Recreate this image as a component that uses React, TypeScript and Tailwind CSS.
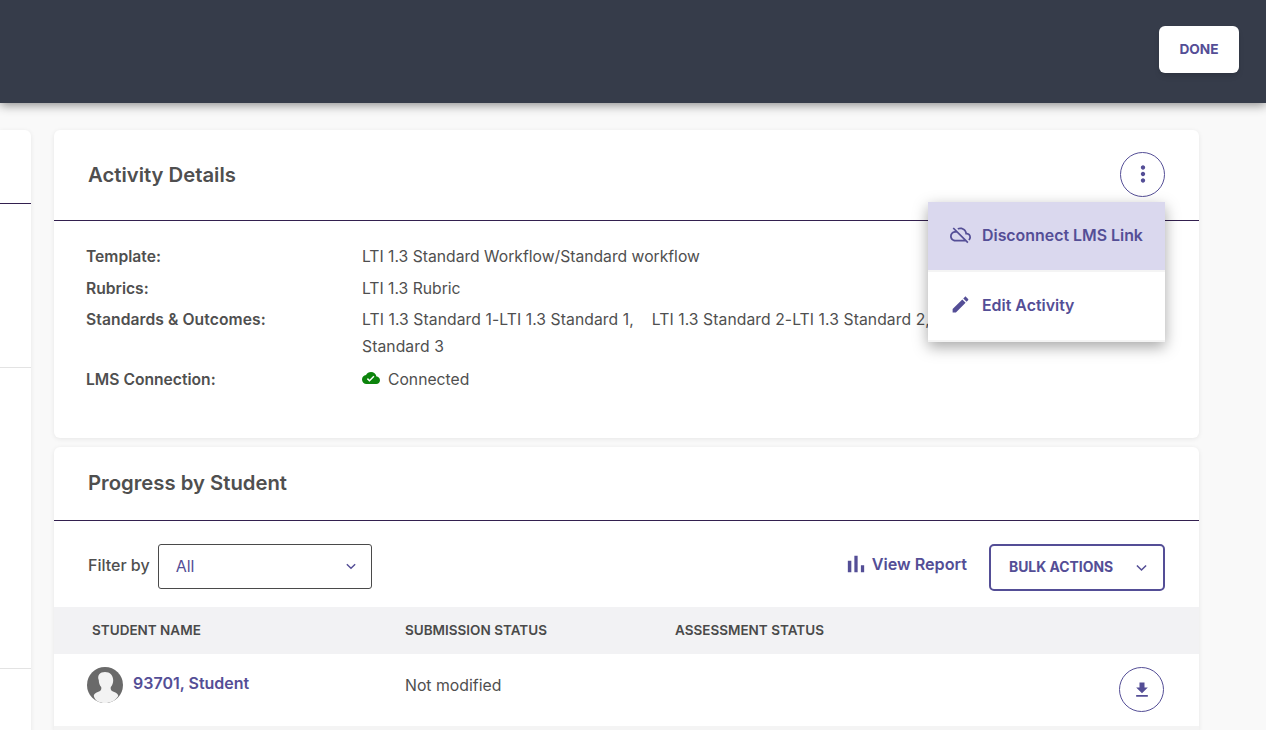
import React from 'react';

const PURPLE = 'text-[#544e96]';

function Icon({ d, className }: { d: string; className?: string }) {
  return (
    <svg viewBox="0 0 24 24" fill="currentColor" className={className}>
      <path d={d} />
    </svg>
  );
}

const icons = {
  more: 'M12 8c1.1 0 2-.9 2-2s-.9-2-2-2-2 .9-2 2 .9 2 2 2zm0 2c-1.1 0-2 .9-2 2s.9 2 2 2 2-.9 2-2-.9-2-2-2zm0 6c-1.1 0-2 .9-2 2s.9 2 2 2 2-.9 2-2-.9-2-2-2z',
  edit: 'M3 17.25V21h3.75L17.81 9.94l-3.75-3.75L3 17.25zM20.71 7.04c.39-.39.39-1.02 0-1.41l-2.34-2.34c-.39-.39-1.02-.39-1.41 0l-1.83 1.83 3.75 3.75 1.83-1.83z',
  chart: 'M5 9.2h3V19H5zM10.6 5h2.8v14h-2.8zm5.6 8H19v6h-2.8z',
  cloudDone:
    'M19.35 10.04C18.67 6.59 15.64 4 12 4 9.11 4 6.6 5.64 5.35 8.04 2.34 8.36 0 10.91 0 14c0 3.31 2.69 6 6 6h13c2.76 0 5-2.24 5-5 0-2.64-2.05-4.78-4.65-4.96zM10 17l-3.5-3.5 1.41-1.41L10 14.17l5.18-5.18 1.41 1.41L10 17z',
  download: 'M19 9h-4V3H9v6H5l7 7 7-7zM5 18v2h14v-2H5z',
  cloudOff:
    'M24 15c0-2.64-2.05-4.78-4.65-4.96C18.67 6.59 15.64 4 12 4c-1.33 0-2.57.36-3.65.97l1.49 1.49C10.51 6.17 11.23 6 12 6c3.04 0 5.5 2.46 5.5 5.5v.5H19c1.66 0 3 1.34 3 3 0 .99-.48 1.85-1.21 2.4l1.41 1.41c1.09-.92 1.8-2.27 1.8-3.81zM4.41 3.86L3 5.27l2.77 2.77h-.42C2.34 8.36 0 10.91 0 14c0 3.31 2.69 6 6 6h11.73l2 2 1.41-1.41L4.41 3.86zM6 18c-2.21 0-4-1.79-4-4s1.79-4 4-4h1.73l8 8H6z',
};

function Chevron({ className }: { className?: string }) {
  return (
    <svg viewBox="0 0 12 8" fill="none" stroke="currentColor" strokeWidth="1.7" className={className}>
      <path d="M1 1.200 6 6.200l5-5" />
    </svg>
  );
}

function Avatar() {
  return (
    <svg viewBox="0 0 36 36" className="w-9 h-9 shrink-0">
      <circle cx="18" cy="18" r="18" fill="#6a6a6a" />
      <path
        d="M18 5c5 0 8.200 3.400 8.200 8.200 0 2.800-.9 5.200-2.400 6.800-.4 1.800 0 3 1.200 4 .9.700 2.200 1 3.400 1.600 1.700.9 2.800 2 2.800 3.400C28 34 23.500 36 18 36S8 34 6.800 29c0-1.400 1.100-2.500 2.800-3.400 1.200-.6 2.500-.9 3.400-1.600 1.200-1 1.600-2.200 1.200-4-1.500-1.600-2.400-4-2.400-6.800C9.800 8.400 13 5 18 5z"
        fill="#f3f3f3"
      />
    </svg>
  );
}

function DetailRow({ label, children, className }: { label: string; children: React.ReactNode; className?: string }) {
  return (
    <div className={`flex ${className ?? ''}`}>
      <div className="w-[276px] shrink-0 text-[15.65px] leading-[27px] font-semibold text-[#4f4f4f]">{label}</div>
      <div className="flex-1 text-[15.7px] leading-[27px] text-[#4f4f4f]">{children}</div>
    </div>
  );
}

export default function App() {
  return (
    <div className="h-[730px] w-[1266px] overflow-hidden bg-[#f9f9f9] font-['Inter',sans-serif] flex flex-col">
      <header className="h-[103px] shrink-0 bg-[#363c4a] shadow-[0_2px_10px_rgba(0,0,0,0.45)] flex justify-end items-start pt-[26px] pr-[27px] relative z-10">
        <button className={`w-[80px] h-[47px] bg-white rounded-md shadow-md text-[13.7px] font-bold ${PURPLE}`}>DONE</button>
      </header>

      <div className="flex gap-[23px] pt-[27px]">
        {/* left column, mostly off screen */}
        <aside className="w-[31px] h-[640px] shrink-0 bg-white rounded-r-md shadow-[0_1px_5px_rgba(0,0,0,0.08)] flex flex-col">
          <div className="h-[74px] border-b border-[#33204f]" />
          <div className="h-[164px] border-b border-[#e3e3e3]" />
          <div className="h-[301px] border-b border-[#e3e3e3]" />
        </aside>

        <main className="w-[1145px] shrink-0 flex flex-col gap-[9px]">
          <section className="h-[308px] bg-white rounded-md shadow-[0_1px_5px_rgba(0,0,0,0.08)] relative">
            <div className="h-[91px] border-b border-[#33204f] flex items-center justify-between pl-[34px] pr-[34px]">
              <h2 className="text-[20.3px] font-semibold text-[#4f4f4f]">Activity Details</h2>
              <button className={`w-[45px] h-[45px] -mt-[2px] rounded-full border border-[#544e96] flex items-center justify-center ${PURPLE}`}>
                <Icon d={icons.more} className="w-[26px] h-[26px]" />
              </button>
            </div>
            <div className="pl-[32px] pr-[34px] pt-[22px] overflow-hidden">
              <DetailRow label="Template:" className="h-[32px]">
                LTI 1.3 Standard Workflow/Standard workflow
              </DetailRow>
              <DetailRow label="Rubrics:" className="h-[31px]">
                LTI 1.3 Rubric
              </DetailRow>
              <DetailRow label="Standards &amp; Outcomes:" className="h-[60px] tracking-[0.08px]">
                LTI 1.3 Standard 1-LTI 1.3 Standard 1, &nbsp;&nbsp; LTI 1.3 Standard 2-LTI 1.3 Standard 2, &nbsp;&nbsp; LTI 1.3 Standard 3-LTI 1.3 Standard 3
              </DetailRow>
              <DetailRow label="LMS Connection:">
                <span className="flex items-center gap-[8px]">
                  <Icon d={icons.cloudDone} className="w-[18px] h-[18px] text-[#0c840c] mb-[3px]" />
                  Connected
                </span>
              </DetailRow>
            </div>

            <div className={`absolute left-[874px] top-[72px] w-[237px] bg-[#f4f4f4] shadow-[0_5px_14px_rgba(0,0,0,0.35)] pb-[2px] ${PURPLE} text-[15.9px] font-semibold`}>
              <div className="h-[68px] bg-[#dad8ee] flex items-center pl-[22px] pb-[1px] gap-[11px]">
                <Icon d={icons.cloudOff} className="w-[21px] h-[21px] mb-[3px]" />
                Disconnect LMS Link
              </div>
              <div className="mt-[2px] h-[68px] bg-white flex items-center pl-[22px] pb-[1px] gap-[11px]">
                <Icon d={icons.edit} className="w-[21px] h-[21px] mb-[3px]" />
                Edit Activity
              </div>
            </div>
          </section>

          <section className="bg-white rounded-t-md shadow-[0_1px_5px_rgba(0,0,0,0.08)]">
            <div className="h-[74px] border-b border-[#33204f] flex items-center pl-[34px]">
              <h2 className="text-[20.3px] font-semibold text-[#4f4f4f]">Progress by Student</h2>
            </div>
            <div className="h-[86px] flex items-start pt-[23px] pl-[34px] pr-[34px]">
              <span className="text-[16px] leading-[42px] font-medium text-[#4f4f4f] mr-[8px]">Filter by</span>
              <div className={`w-[214px] h-[45px] border border-[#4a4a4a] rounded-[3px] flex items-center justify-between pl-[17px] pr-[15px] pb-[1px] text-[16px] ${PURPLE}`}>
                All
                <Chevron className="w-[10px] h-[7px]" />
              </div>
              <a className={`ml-auto flex items-center gap-[2px] h-[41px] text-[16.2px] font-semibold ${PURPLE}`}>
                <Icon d={icons.chart} className="w-[28px] h-[28px] mb-[2px]" />
                View Report
              </a>
              <button className={`ml-[22px] w-[176px] h-[47px] border-2 border-[#544e96] rounded-[5px] flex items-center justify-between pl-[18px] pr-[16px] text-[13.9px] font-bold ${PURPLE}`}>
                BULK ACTIONS
                <Chevron className="w-[11px] h-[8px]" />
              </button>
            </div>
            <div className="h-[47px] bg-[#f2f2f4] flex items-center text-[13.5px] font-semibold text-[#4a4a4a]">
              <span className="ml-[38px] w-[313px]">STUDENT NAME</span>
              <span className="w-[270px]">SUBMISSION STATUS</span>
              <span>ASSESSMENT STATUS</span>
            </div>
            <div className="h-[77px] border-b-[5px] border-[#f4f4f4] flex items-start pt-[13px] pl-[33px] pr-[35px]">
              <Avatar />
              <span className={`ml-[10px] w-[272px] text-[16px] leading-[32px] font-semibold ${PURPLE}`}>93701, Student</span>
              <span className="text-[15.8px] leading-[38px] text-[#4f4f4f]">Not modified</span>
              <button className={`ml-auto w-[45px] h-[45px] rounded-full border border-[#544e96] flex items-center justify-center ${PURPLE}`}>
                <Icon d={icons.download} className="w-5 h-5" />
              </button>
            </div>
          </section>
        </main>
      </div>
    </div>
  );
}
